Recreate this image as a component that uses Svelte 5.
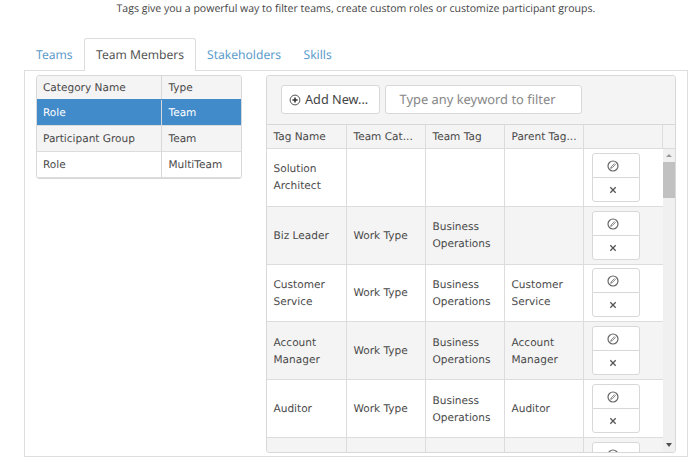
<script>
  const tabs = ['Teams', 'Team Members', 'Stakeholders', 'Skills'];
  const categories = [
    ['Role', 'Team'],
    ['Participant Group', 'Team'],
    ['Role', 'MultiTeam']
  ];
  const headings = ['Tag Name', 'Team Cat...', 'Team Tag', 'Parent Tag...', '', ''];
  const tags = [
    ['Solution Architect', '', '', ''],
    ['Biz Leader', 'Work Type', 'Business Operations', ''],
    ['Customer Service', 'Work Type', 'Business Operations', 'Customer Service'],
    ['Account Manager', 'Work Type', 'Business Operations', 'Account Manager'],
    ['Auditor', 'Work Type', 'Business Operations', 'Auditor'],
    ['', '', '', '']
  ];
</script>

<main>
  <p class="intro">Tags give you a powerful way to filter teams, create custom roles or customize participant groups.</p>
  <nav>
    {#each tabs as tab, i}
      <a class="tab t{i}" class:active={i === 1}><span>{tab}</span></a>
    {/each}
  </nav>
  <section class="panel">
    <div class="categories">
      <div class="cat head"><span>Category Name</span><span>Type</span></div>
      {#each categories as row, i}
        <div class="cat" class:selected={i === 0} class:alt={i === 1}>
          <span>{row[0]}</span><span>{row[1]}</span>
        </div>
      {/each}
    </div>
    <div class="grid">
      <div class="toolbar">
        <button class="add">
          <svg width="12" height="12" viewBox="0 0 12 12">
            <circle cx="6" cy="6" r="4.9" fill="none" stroke="#555" stroke-width="1" />
            <path d="M6 3.4v5.2M3.4 6h5.2" stroke="#333" stroke-width="1.6" />
          </svg>
          <span>Add New...</span>
        </button>
        <div class="filter"><span>Type any keyword to filter</span></div>
      </div>
      <div class="row heads">
        {#each headings as h}<div class="cell"><span>{h}</span></div>{/each}
      </div>
      <div class="body">
        <div class="rows">
          {#each tags as tag, i}
            <div class="row" class:alt={i % 2 === 1}>
              {#each tag as value}<div class="cell"><span>{value}</span></div>{/each}
              <div class="cell actions">
                <button class="act">
                  <svg width="12" height="12" viewBox="0 0 12 12" fill="none" stroke="#666">
                    <circle cx="6" cy="6" r="5" stroke-width="1.2" />
                    <path d="M3.7 8.3L4.2 6.9L7.4 3.7L8.3 4.6L5.1 7.8Z" stroke-width=".8" />
                  </svg>
                </button>
                <button class="act">
                  <svg width="12" height="12" viewBox="0 0 12 12" fill="none" stroke="#555">
                    <path d="M3.3 3.3L8.7 8.7M8.7 3.3L3.3 8.7" stroke-width="1.3" />
                  </svg>
                </button>
              </div>
            </div>
          {/each}
        </div>
        <div class="scroll">
          <i class="up"></i>
          <i class="thumb"></i>
          <i class="down"></i>
        </div>
      </div>
    </div>
  </section>
</main>

<style>
  :global(body) { background: #fff; overflow: hidden; }
  main {
    width: 695px; height: 465px; box-sizing: border-box; overflow: hidden;
    font: 10.55px/17px "DejaVu Sans", sans-serif; color: #4a4a4a; background: #fff;
    text-rendering: geometricPrecision;
  }
  .intro {
    margin: 0; height: 38px; padding-left: 116.5px; white-space: nowrap; color: #444;
    font: 10.55px/18px "Open Sans", sans-serif;
  }
  nav { display: flex; height: 33px; padding-left: 24px; position: relative; z-index: 1; }
  .tab {
    box-sizing: border-box; height: 32px; padding: 0 0 0 12px; white-space: nowrap;
    font: 12.1px/34px "Noto Sans", sans-serif; color: #5b9bcb;
  }
  .t0 { width: 60px; }
  .t2 { width: 96px; padding-left: 11px; }
  .t3 { padding-left: 11.5px; }
  .active {
    width: 112px; height: 33px; padding-left: 11px; line-height: 32px; color: #555; background: #fff;
    border: 1px solid #dcdcdc; border-bottom: 0; border-radius: 3px 3px 0 0;
  }
  .panel {
    box-sizing: border-box; display: flex; justify-content: space-between; align-items: flex-start;
    width: 664px; height: 387px; margin: -1px 0 0 24px; padding: 4px 11px;
    border: 1px solid #dedede;
  }
  .categories {
    box-sizing: border-box; width: 206px; height: 104px; border: 1px solid #d8d8d8;
    border-radius: 3px; overflow: hidden;
  }
  .cat { box-sizing: border-box; display: flex; height: 26px; line-height: 26px; border-bottom: 1px solid #dcdcdc; }
  .cat span { box-sizing: border-box; width: 125px; padding-left: 6px; border-right: 1px solid #d8d8d8; white-space: nowrap; }
  .cat span + span { width: 79px; padding-left: 6.5px; border: 0; }
  .cat.head { height: 24px; line-height: 24px; background: #f4f4f4; border-bottom-color: #428bca; }
  .alt { background: #f4f4f4; }
  .selected { background: #428bca; color: #fff; }
  .grid {
    box-sizing: border-box; width: 410px; height: 378px; border: 1px solid #d8d8d8;
    border-radius: 3px; overflow: hidden;
  }
  .toolbar {
    box-sizing: border-box; display: flex; gap: 5px; height: 49px; padding: 9px 14px;
    background: #f4f4f4; border-bottom: 1px solid #d8d8d8;
  }
  button { border: 1px solid #d8d8d8; background: #fff; padding: 0; margin: 0; box-sizing: border-box; }
  .add {
    display: flex; align-items: center; gap: 4px; width: 99px; height: 29px; padding-left: 7px;
    border-radius: 3px; font: 12.7px/27px "Noto Sans", sans-serif; color: #444; white-space: nowrap;
  }
  .filter {
    box-sizing: border-box; width: 197px; height: 29px; padding-left: 13.5px; background: #fff;
    border: 1px solid #d8d8d8; border-radius: 3px;
    font: 12.9px/27px "Noto Sans", sans-serif; color: #888; white-space: nowrap;
  }
  .row {
    display: grid; grid-template-columns: 80px 79px 79px 79px 79px; flex: none;
    box-sizing: border-box; height: 57.8px; border-bottom: 1px solid #dcdcdc;
  }
  .heads { grid-template-columns: 80px 79px 79px 79px 79px 12px; height: 24px; background: #f4f4f4; white-space: nowrap; }
  .cell { box-sizing: border-box; display: flex; align-items: center; padding: 2px 0 0 6.5px; border-right: 1px solid #dcdcdc; }
  .heads .cell:last-child { border: 0; }
  .body { display: flex; height: 303px; overflow: hidden; }
  .rows { width: 396px; }
  .row .actions { flex-direction: column; align-items: flex-start; justify-content: center; padding: 0 0 0 8px; border: 0; }
  .act {
    display: flex; align-items: center; width: 48px; height: 25px; padding: 1px 0 0 14px;
    border-radius: 3px 3px 0 0;
  }
  .act + .act { margin-top: -1px; border-radius: 0 0 3px 3px; }
  .scroll {
    box-sizing: border-box; display: flex; flex-direction: column; align-items: center;
    width: 12px; height: 303px; background: #f0f0f0; padding: 5px 0;
  }
  .up { border: 3px solid transparent; border-top: 0; border-bottom: 3px solid #999; }
  .thumb { width: 12px; height: 36px; margin-top: 5px; background: #c1c1c1; }
  .down { border: 3px solid transparent; border-bottom: 0; border-top: 4px solid #505050; margin-top: auto; }
</style>
